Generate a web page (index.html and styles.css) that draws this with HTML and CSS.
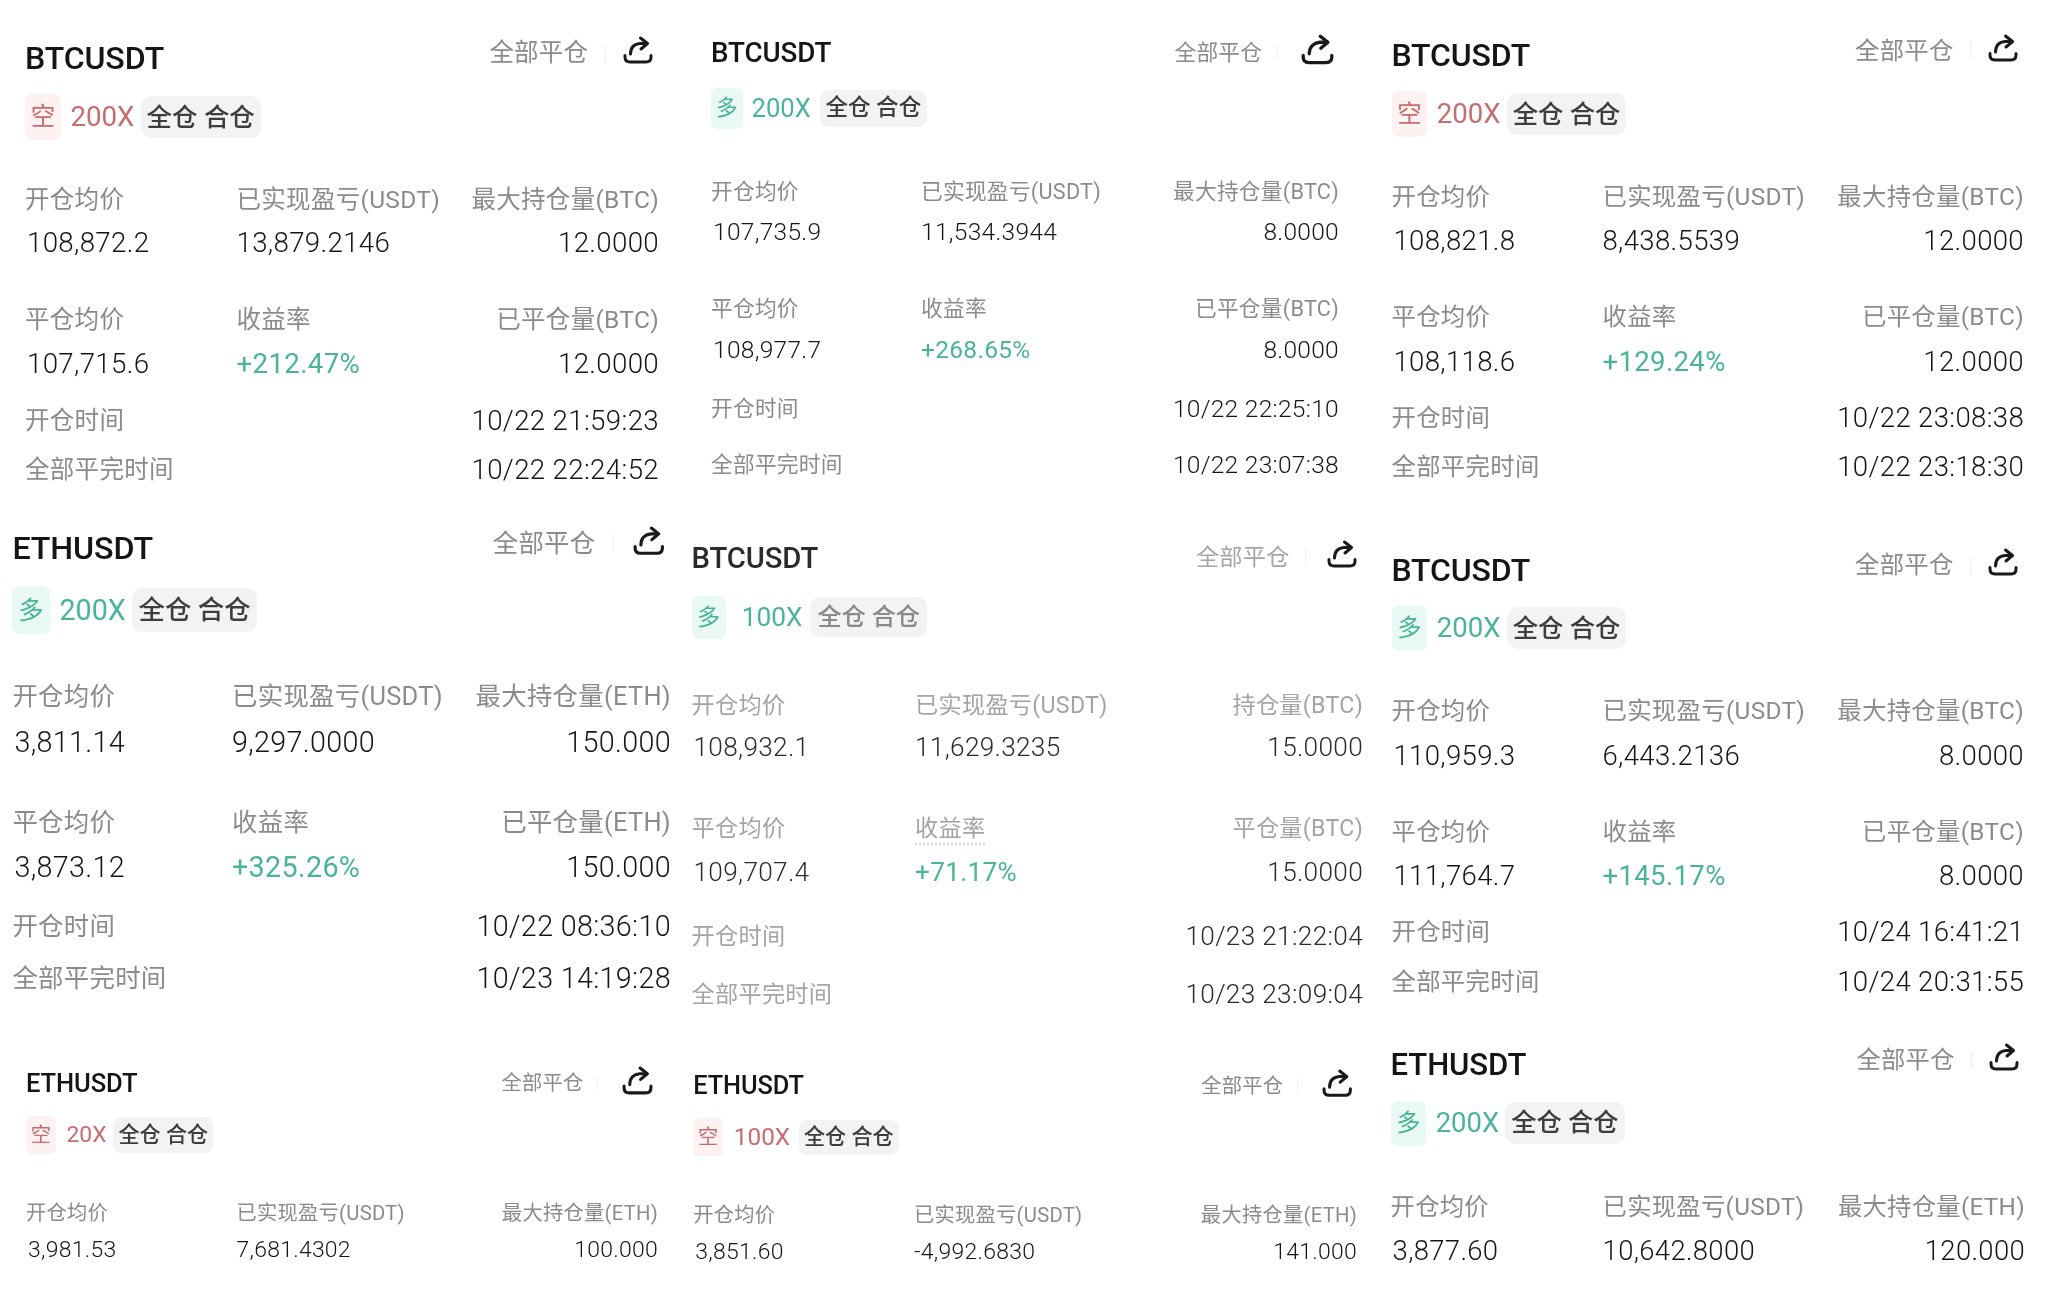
FILE: index.html
```html
<!DOCTYPE html>
<html lang="zh-CN">
<head>
<meta charset="utf-8">
<title>仓位历史</title>
<link rel="stylesheet" href="styles.css">
</head>
<body>
<svg class="defs" width="0" height="0"><defs><g id="share"><path d="M2 19.5v1.5q0 5 5 5h16q5 0 5-5v-1.5"/><path d="M7.5 18C7.5 11 12 8 17 7.5H24"/><path d="M17.5 2L24.5 7.5L18 13"/></g></defs></svg>
<main class="board">

<section class="panel p1">
  <div class="row head"><h2 class="sym">BTCUSDT</h2><div class="act"><span>全部平仓</span><i class="sep"></i><svg class="ico" viewBox="0 0 30 28"><use href="#share"/></svg></div></div>
  <div class="row tags"><span class="dir short">空</span><span class="lev short">200X</span><span class="mode">全仓 合仓</span></div>
  <div class="row cells r-l1"><span class="lbl">开仓均价</span><span class="lbl">已实现盈亏(USDT)</span><span class="lbl">最大持仓量(BTC)</span></div>
  <div class="row cells r-v1"><span class="num">108,872.2</span><span class="num">13,879.2146</span><span class="num">12.0000</span></div>
  <div class="row cells r-l2"><span class="lbl">平仓均价</span><span class="lbl">收益率</span><span class="lbl">已平仓量(BTC)</span></div>
  <div class="row cells r-v2"><span class="num">107,715.6</span><span class="num up">+212.47%</span><span class="num">12.0000</span></div>
  <div class="row time r-t1"><span class="lbl">开仓时间</span><span class="num">10/22 21:59:23</span></div>
  <div class="row time r-t2"><span class="lbl">全部平完时间</span><span class="num">10/22 22:24:52</span></div>
</section>

<section class="panel p2">
  <div class="row head"><h2 class="sym">BTCUSDT</h2><div class="act"><span>全部平仓</span><i class="sep"></i><svg class="ico" viewBox="0 0 30 28"><use href="#share"/></svg></div></div>
  <div class="row tags"><span class="dir long">多</span><span class="lev long">200X</span><span class="mode">全仓 合仓</span></div>
  <div class="row cells r-l1"><span class="lbl">开仓均价</span><span class="lbl">已实现盈亏(USDT)</span><span class="lbl">最大持仓量(BTC)</span></div>
  <div class="row cells r-v1"><span class="num">107,735.9</span><span class="num">11,534.3944</span><span class="num">8.0000</span></div>
  <div class="row cells r-l2"><span class="lbl">平仓均价</span><span class="lbl">收益率</span><span class="lbl">已平仓量(BTC)</span></div>
  <div class="row cells r-v2"><span class="num">108,977.7</span><span class="num up">+268.65%</span><span class="num">8.0000</span></div>
  <div class="row time r-t1"><span class="lbl">开仓时间</span><span class="num">10/22 22:25:10</span></div>
  <div class="row time r-t2"><span class="lbl">全部平完时间</span><span class="num">10/22 23:07:38</span></div>
</section>

<section class="panel p3">
  <div class="row head"><h2 class="sym">BTCUSDT</h2><div class="act"><span>全部平仓</span><i class="sep"></i><svg class="ico" viewBox="0 0 30 28"><use href="#share"/></svg></div></div>
  <div class="row tags"><span class="dir short">空</span><span class="lev short">200X</span><span class="mode">全仓 合仓</span></div>
  <div class="row cells r-l1"><span class="lbl">开仓均价</span><span class="lbl">已实现盈亏(USDT)</span><span class="lbl">最大持仓量(BTC)</span></div>
  <div class="row cells r-v1"><span class="num">108,821.8</span><span class="num">8,438.5539</span><span class="num">12.0000</span></div>
  <div class="row cells r-l2"><span class="lbl">平仓均价</span><span class="lbl">收益率</span><span class="lbl">已平仓量(BTC)</span></div>
  <div class="row cells r-v2"><span class="num">108,118.6</span><span class="num up">+129.24%</span><span class="num">12.0000</span></div>
  <div class="row time r-t1"><span class="lbl">开仓时间</span><span class="num">10/22 23:08:38</span></div>
  <div class="row time r-t2"><span class="lbl">全部平完时间</span><span class="num">10/22 23:18:30</span></div>
</section>

<section class="panel p4">
  <div class="row head"><h2 class="sym">ETHUSDT</h2><div class="act"><span>全部平仓</span><i class="sep"></i><svg class="ico" viewBox="0 0 30 28"><use href="#share"/></svg></div></div>
  <div class="row tags"><span class="dir long">多</span><span class="lev long">200X</span><span class="mode">全仓 合仓</span></div>
  <div class="row cells r-l1"><span class="lbl">开仓均价</span><span class="lbl">已实现盈亏(USDT)</span><span class="lbl">最大持仓量(ETH)</span></div>
  <div class="row cells r-v1"><span class="num">3,811.14</span><span class="num">9,297.0000</span><span class="num">150.000</span></div>
  <div class="row cells r-l2"><span class="lbl">平仓均价</span><span class="lbl">收益率</span><span class="lbl">已平仓量(ETH)</span></div>
  <div class="row cells r-v2"><span class="num">3,873.12</span><span class="num up">+325.26%</span><span class="num">150.000</span></div>
  <div class="row time r-t1"><span class="lbl">开仓时间</span><span class="num">10/22 08:36:10</span></div>
  <div class="row time r-t2"><span class="lbl">全部平完时间</span><span class="num">10/23 14:19:28</span></div>
</section>

<section class="panel p5">
  <div class="row head"><h2 class="sym">BTCUSDT</h2><div class="act"><span>全部平仓</span><i class="sep"></i><svg class="ico" viewBox="0 0 30 28"><use href="#share"/></svg></div></div>
  <div class="row tags"><span class="dir long">多</span><span class="lev long">100X</span><span class="mode">全仓 合仓</span></div>
  <div class="row cells r-l1"><span class="lbl">开仓均价</span><span class="lbl">已实现盈亏(USDT)</span><span class="lbl">持仓量(BTC)</span></div>
  <div class="row cells r-v1"><span class="num">108,932.1</span><span class="num">11,629.3235</span><span class="num">15.0000</span></div>
  <div class="row cells r-l2"><span class="lbl">平仓均价</span><span class="lbl dotted">收益率</span><span class="lbl">平仓量(BTC)</span></div>
  <div class="row cells r-v2"><span class="num">109,707.4</span><span class="num up">+71.17%</span><span class="num">15.0000</span></div>
  <div class="row time r-t1"><span class="lbl">开仓时间</span><span class="num">10/23 21:22:04</span></div>
  <div class="row time r-t2"><span class="lbl">全部平完时间</span><span class="num">10/23 23:09:04</span></div>
</section>

<section class="panel p6">
  <div class="row head"><h2 class="sym">BTCUSDT</h2><div class="act"><span>全部平仓</span><i class="sep"></i><svg class="ico" viewBox="0 0 30 28"><use href="#share"/></svg></div></div>
  <div class="row tags"><span class="dir long">多</span><span class="lev long">200X</span><span class="mode">全仓 合仓</span></div>
  <div class="row cells r-l1"><span class="lbl">开仓均价</span><span class="lbl">已实现盈亏(USDT)</span><span class="lbl">最大持仓量(BTC)</span></div>
  <div class="row cells r-v1"><span class="num">110,959.3</span><span class="num">6,443.2136</span><span class="num">8.0000</span></div>
  <div class="row cells r-l2"><span class="lbl">平仓均价</span><span class="lbl">收益率</span><span class="lbl">已平仓量(BTC)</span></div>
  <div class="row cells r-v2"><span class="num">111,764.7</span><span class="num up">+145.17%</span><span class="num">8.0000</span></div>
  <div class="row time r-t1"><span class="lbl">开仓时间</span><span class="num">10/24 16:41:21</span></div>
  <div class="row time r-t2"><span class="lbl">全部平完时间</span><span class="num">10/24 20:31:55</span></div>
</section>

<section class="panel p7">
  <div class="row head"><h2 class="sym">ETHUSDT</h2><div class="act"><span>全部平仓</span><i class="sep"></i><svg class="ico" viewBox="0 0 30 28"><use href="#share"/></svg></div></div>
  <div class="row tags"><span class="dir short">空</span><span class="lev short">20X</span><span class="mode">全仓 合仓</span></div>
  <div class="row cells r-l1"><span class="lbl">开仓均价</span><span class="lbl">已实现盈亏(USDT)</span><span class="lbl">最大持仓量(ETH)</span></div>
  <div class="row cells r-v1"><span class="num">3,981.53</span><span class="num">7,681.4302</span><span class="num">100.000</span></div>
</section>

<section class="panel p8">
  <div class="row head"><h2 class="sym">ETHUSDT</h2><div class="act"><span>全部平仓</span><i class="sep"></i><svg class="ico" viewBox="0 0 30 28"><use href="#share"/></svg></div></div>
  <div class="row tags"><span class="dir short">空</span><span class="lev short">100X</span><span class="mode">全仓 合仓</span></div>
  <div class="row cells r-l1"><span class="lbl">开仓均价</span><span class="lbl">已实现盈亏(USDT)</span><span class="lbl">最大持仓量(ETH)</span></div>
  <div class="row cells r-v1"><span class="num">3,851.60</span><span class="num">-4,992.6830</span><span class="num">141.000</span></div>
</section>

<section class="panel p9">
  <div class="row head"><h2 class="sym">ETHUSDT</h2><div class="act"><span>全部平仓</span><i class="sep"></i><svg class="ico" viewBox="0 0 30 28"><use href="#share"/></svg></div></div>
  <div class="row tags"><span class="dir long">多</span><span class="lev long">200X</span><span class="mode">全仓 合仓</span></div>
  <div class="row cells r-l1"><span class="lbl">开仓均价</span><span class="lbl">已实现盈亏(USDT)</span><span class="lbl">最大持仓量(ETH)</span></div>
  <div class="row cells r-v1"><span class="num">3,877.60</span><span class="num">10,642.8000</span><span class="num">120.000</span></div>
</section>

</main>
</body>
</html>
```
FILE: styles.css
```css
html, body { margin: 0; padding: 0; background: #fff; }
.defs { position: absolute; }
.board {
  display: grid;
  grid-template-columns: 683px 687px 678px;
  grid-template-rows: 515px 525px 265px;
  width: 2048px;
  height: 1305px;
  overflow: hidden;
  background: #fff;
  filter: blur(0.45px);
  font-family: Roboto, "Noto Sans CJK SC", sans-serif;
}
.panel {
  box-sizing: border-box;
  min-width: 0;
  font-size: var(--f);
  padding: var(--pt) var(--pr) 0 var(--pl);
  color: #1c1c1c;
  --lbl: #8b8b8b;
  --ink: #151515;
  --mode: #3d3d3d;
  --a: 10px;
  --ic: 30px;
  --ts: 1.28em;
  --gap: 0px;
  --lf: 1.13em;
  --ll: 0.34em;
  --lr: 0.22em;
  --mp: 0.24em;
}
.row { height: 32px; display: flex; align-items: center; line-height: 32px; white-space: nowrap; }

.head { justify-content: space-between; }
.sym { margin: 0; font-size: var(--ts); font-weight: 500; color: var(--ink); letter-spacing: -0.004em; }
.act { display: flex; align-items: center; color: var(--lbl); margin-bottom: var(--a); margin-right: 0.24em; letter-spacing: 0.01em; }
.sep { width: 1px; height: 0.7em; background: #efefef; margin: 0 calc(0.78em + var(--gap)) 0 0.68em; }
.ico { width: var(--ic); height: auto; margin-bottom: 6px; fill: none; stroke: #1a1a1a; stroke-width: 3; stroke-linecap: round; stroke-linejoin: round; overflow: visible; }

.tags { margin-top: calc(var(--d-tag) - 32px); }
.dir { display: flex; align-items: center; justify-content: center; width: 1.47em; height: 1.87em; border-radius: 0.3em; }
.lev { font-size: var(--lf); margin: 0 var(--lr) 0 var(--ll); }
.mode { display: flex; align-items: center; height: 1.66em; padding: 0 var(--mp); border-radius: 0.4em; background: #f3f3f4; color: var(--mode); font-size: 1.04em; font-weight: 500; }
.short { color: #c76d70; }
.long { color: #4ab498; }
.dir.short { background: #fdf1f1; }
.dir.long { background: #e9f9f3; }

.cells { display: grid; grid-template-columns: var(--c1) 1fr auto; align-items: center; }
.cells .num:first-child { margin-left: 2px; }
.time { justify-content: space-between; }
.lbl { color: var(--lbl); letter-spacing: 0.012em; }
.num { font-size: 1.13em; font-weight: 300; letter-spacing: 0.012em; color: var(--ink); }
.num.up { color: #4ab498; font-weight: 400; }
.dotted { text-decoration: underline dotted #d6d6d6; text-underline-offset: 7px; }

.r-l1 { margin-top: calc(var(--d-l1) - 32px); }
.r-v1 { margin-top: calc(var(--d-v1) - 32px); }
.r-l2 { margin-top: calc(var(--d-l2) - 32px); }
.r-v2 { margin-top: calc(var(--d-v2) - 32px); }
.r-t1 { margin-top: calc(var(--d-t1) - 32px); }
.r-t2 { margin-top: calc(var(--d-t2) - 32px); }

.p1 { --f: 24.5px; --pt: 42.3px; --pl: 25px; --pr: 24px; --c1: 211.5px; --ts: 1.31em; --gap: -2px; --d-tag: 58.4px; --d-l1: 83.3px; --d-v1: 43.3px; --d-l2: 76.7px; --d-v2: 44px; --d-t1: 56.7px; --d-t2: 49.3px; }
.p2 { --f: 21.7px; --pt: 36.7px; --pl: 28px; --pr: 31px; --c1: 210px; --a: 0px; --ic: 33px; --gap: 6px; --lf: 1.18em; --lr: 0.36em; --d-tag: 55.6px; --d-l1: 83.4px; --d-v1: 40.6px; --d-l2: 77px; --d-v2: 40.7px; --d-t1: 59.3px; --d-t2: 55.7px; }
.p3 { --f: 24.4px; --pt: 39px; --pl: 21.5px; --pr: 24px; --c1: 211px; --a: 8.6px; --ts: 1.31em; --gap: -2px; --d-tag: 59px; --d-l1: 82.7px; --d-v1: 44px; --d-l2: 76.6px; --d-v2: 44.4px; --d-t1: 56px; --d-t2: 49.6px; }
.p4 { --f: 25.4px; --pt: 17.3px; --pl: 12.4px; --pr: 12px; --c1: 219.6px; --ic: 31.5px; --ts: 1.27em; --d-tag: 61.7px; --d-l1: 86px; --d-v1: 45.7px; --d-l2: 80px; --d-v2: 45.6px; --d-t1: 58.7px; --d-t2: 51.7px; }
.p5 { --f: 23.2px; --pt: 27.3px; --pl: 8.5px; --pr: 7px; --c1: 223.5px; --a: 3.3px; --lbl: #a4a4a4; --ink: #2b2b2b; --mode: #8a8a8a; --ts: 1.26em; --gap: 3px; --ll: 0.62em; --lr: 0.3em; --mp: 0.3em; --d-tag: 59px; --d-l1: 87.7px; --d-v1: 42.3px; --d-l2: 81px; --d-v2: 44px; --d-t1: 63.4px; --d-t2: 58.3px; }
.p6 { --f: 24.4px; --pt: 39px; --pl: 21.5px; --pr: 24px; --c1: 211px; --ts: 1.31em; --gap: -2px; --d-tag: 58.3px; --d-l1: 83px; --d-v1: 44.4px; --d-l2: 76px; --d-v2: 44.3px; --d-t1: 56.3px; --d-t2: 50px; }
.p7 { --f: 20.3px; --pt: 26.7px; --pl: 26px; --pr: 25px; --c1: 210.5px; --a: -1.2px; --ic: 31px; --ts: 1.26em; --gap: 8px; --ll: 0.46em; --lr: 0.3em; --d-tag: 52.3px; --d-l1: 77.7px; --d-v1: 37.3px; }
.p8 { --f: 20.3px; --pt: 29px; --pl: 10.3px; --pr: 13px; --c1: 220.7px; --a: -1.4px; --ic: 30.4px; --ts: 1.25em; --gap: 8px; --lf: 1.2em; --ll: 0.44em; --lr: 0.36em; --d-tag: 52.3px; --d-l1: 77.7px; --d-v1: 36.7px; }
.p9 { --f: 24.3px; --pt: 9px; --pl: 20.6px; --pr: 23px; --c1: 212px; --gap: -2px; --d-tag: 58.3px; --d-l1: 83.4px; --d-v1: 44px; }
```
